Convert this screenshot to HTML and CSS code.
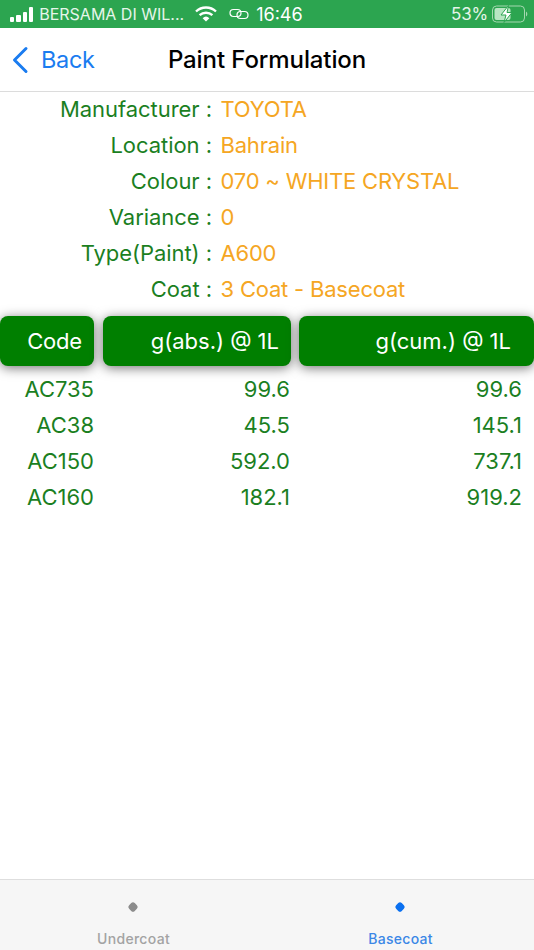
FILE: index.html
```html
<!DOCTYPE html>
<html lang="en">
<head>
    <meta charset="UTF-8">
    <meta name="viewport" content="width=device-width, initial-scale=1.0">
    <title>Paint Formulation</title>
    <link rel="stylesheet" href="styles.css">
</head>
<body>
    <div class="phone">
        <div class="status-bar">
            <div class="status-left">
                <div class="signal">
                    <span class="b1"></span><span class="b2"></span><span class="b3"></span><span class="b4"></span>
                </div>
                <span class="carrier">BERSAMA DI WIL...</span>
                <svg class="wifi" width="22" height="16" viewBox="0 0 22 16">
                    <path d="M1 5.5 A14.5 14.5 0 0 1 21 5.5" fill="none" stroke="#fff" stroke-width="2.4"/>
                    <path d="M4.6 9.2 A9.5 9.5 0 0 1 17.4 9.2" fill="none" stroke="#fff" stroke-width="2.4"/>
                    <path d="M11 15.5 L7.6 12.2 A5 5 0 0 1 14.4 12.2 Z" fill="#fff"/>
                </svg>
                <svg class="link" width="20" height="12" viewBox="0 0 20 12">
                    <rect x="1" y="1.5" width="11" height="7" rx="3.5" fill="none" stroke="#fff" stroke-width="1.2"/>
                    <rect x="8" y="3.5" width="11" height="7" rx="3.5" fill="none" stroke="#fff" stroke-width="1.2"/>
                </svg>
                <span class="clock">16:46</span>
            </div>
            <div class="status-right">
                <span class="percent">53%</span>
                <svg class="battery" width="36" height="18" viewBox="0 0 36 18">
                    <rect x="0.5" y="1" width="32" height="16" rx="4" fill="none" stroke="#a5d8b0" stroke-width="1"/>
                    <rect x="2.5" y="3" width="16" height="12" rx="2" fill="#b9e6c3"/>
                    <path d="M34 6.5 A3 3 0 0 1 34 11.5 Z" fill="#a5d8b0"/>
                    <path d="M16.5 0.5 L9 10 L14 10 L12 17.5 L20 7.5 L15 7.5 Z" fill="#fff" stroke="#2ca550" stroke-width="1"/>
                </svg>
            </div>
        </div>

        <div class="nav-bar">
            <div class="back">
                <svg width="18" height="28" viewBox="0 0 18 28">
                    <path d="M15 2.5 L3.5 14 L15 25.5" fill="none" stroke="#1a7cf0" stroke-width="3" stroke-linecap="round" stroke-linejoin="round"/>
                </svg>
                <span>Back</span>
            </div>
            <div class="nav-title">Paint Formulation</div>
        </div>

        <div class="info">
            <div class="info-row"><span class="info-label">Manufacturer :</span><span class="info-value">TOYOTA</span></div>
            <div class="info-row"><span class="info-label">Location :</span><span class="info-value">Bahrain</span></div>
            <div class="info-row"><span class="info-label">Colour :</span><span class="info-value">070 ~ WHITE CRYSTAL</span></div>
            <div class="info-row"><span class="info-label">Variance :</span><span class="info-value">0</span></div>
            <div class="info-row"><span class="info-label">Type(Paint) :</span><span class="info-value">A600</span></div>
            <div class="info-row"><span class="info-label">Coat :</span><span class="info-value">3 Coat - Basecoat</span></div>
        </div>

        <div class="table-head">
            <div class="head-cell col-code">Code</div>
            <div class="head-cell col-abs">g(abs.) @ 1L</div>
            <div class="head-cell col-cum">g(cum.) @ 1L</div>
        </div>

        <div class="table-body">
            <div class="table-row"><span class="col-code">AC735</span><span class="col-abs">99.6</span><span class="col-cum">99.6</span></div>
            <div class="table-row"><span class="col-code">AC38</span><span class="col-abs">45.5</span><span class="col-cum">145.1</span></div>
            <div class="table-row"><span class="col-code">AC150</span><span class="col-abs">592.0</span><span class="col-cum">737.1</span></div>
            <div class="table-row"><span class="col-code">AC160</span><span class="col-abs">182.1</span><span class="col-cum">919.2</span></div>
        </div>

        <div class="tab-bar">
            <div class="tab">
                <span class="tab-dot"></span>
                <span class="tab-label">Undercoat</span>
            </div>
            <div class="tab active">
                <span class="tab-dot"></span>
                <span class="tab-label">Basecoat</span>
            </div>
        </div>
    </div>
</body>
</html>
```

FILE: styles.css
```css
html, body {
    margin: 0;
    padding: 0;
    background: #fff;
}
.phone {
    width: 534px;
    height: 950px;
    display: flex;
    flex-direction: column;
    overflow: hidden;
    font-family: Inter, "Liberation Sans", Arial, sans-serif;
}

/* status bar */
.status-bar {
    height: 28px;
    flex: none;
    background-color: #2ca550;
    color: #fff;
    display: flex;
    justify-content: space-between;
    align-items: center;
    padding: 0 6px 0 10px;
    box-sizing: border-box;
}
.status-left, .status-right {
    display: flex;
    align-items: center;
}
.signal {
    display: flex;
    align-items: flex-end;
    gap: 2px;
    height: 15px;
    margin-right: 6px;
}
.signal span {
    width: 4.3px;
    background: #fff;
    border-radius: 1px;
}
.b1 { height: 5px; }
.b2 { height: 7px; }
.b3 { height: 10px; }
.b4 { height: 15px; }
.carrier {
    font-size: 16px;
    color: #e6f5ea;
}
.wifi { margin-left: 11px; }
.link { margin-left: 12px; }
.clock {
    font-size: 18px;
    margin-left: 7px;
}
.percent {
    font-size: 17px;
    color: #e6f5ea;
    margin-right: 4px;
    letter-spacing: -0.2px;
}

/* nav */
.nav-bar {
    height: 64px;
    flex: none;
    box-sizing: border-box;
    border-bottom: 1px solid #dcdcdc;
    display: flex;
    align-items: center;
    position: relative;
}
.back {
    display: flex;
    align-items: center;
    gap: 12px;
    color: #1a7cf0;
    font-size: 23.5px;
    letter-spacing: -0.3px;
    padding-left: 11px;
}
.nav-title {
    position: absolute;
    left: 0;
    right: 0;
    text-align: center;
    font-size: 24px;
    font-weight: 500;
    letter-spacing: -0.1px;
    color: #000;
}

/* info block */
.info {
    flex: none;
}
.info-row {
    height: 36px;
    display: flex;
    align-items: center;
    font-size: 22px;
    position: relative;
    top: -1px;
}
.info-label {
    width: 212px;
    text-align: right;
    color: #1b7f1f;
    letter-spacing: -0.05px;
}
.info-value {
    margin-left: 8.5px;
    color: #f5a623;
    letter-spacing: -0.2px;
}

/* table */
.table-head {
    display: flex;
    flex: none;
    height: 50px;
    margin-top: 8px;
}
.head-cell {
    background-color: #007f00;
    color: #fff;
    border-radius: 8px;
    box-shadow: 0 2px 12px rgba(0, 0, 0, 0.55);
    display: flex;
    align-items: center;
    justify-content: flex-end;
    font-size: 22px;
    box-sizing: border-box;
    padding-right: 12px;
}
.head-cell.col-code { width: 94px; letter-spacing: -0.2px; }
.head-cell.col-abs { width: 188px; margin-left: 9px; }
.head-cell.col-cum { width: 235px; margin-left: 8px; padding-right: 23px; }
.table-body {
    padding-top: 5px;
    flex: 1;
}
.table-row {
    height: 36px;
    display: flex;
    align-items: center;
    font-size: 22px;
    color: #1b7f1f;
    text-align: right;
}
.table-row .col-code { width: 94px; }
.table-row .col-abs { width: 196px; }
.table-row .col-cum { width: 232px; }

/* bottom tabs */
.tab-bar {
    height: 71px;
    flex: none;
    box-sizing: border-box;
    background-color: #f6f6f6;
    border-top: 1px solid #dedede;
    display: flex;
}
.tab {
    flex: 1;
    display: flex;
    flex-direction: column;
    align-items: center;
    color: #a3a3a3;
}
.tab-dot {
    width: 8px;
    height: 8px;
    margin-top: 23px;
    margin-right: 1px;
    background: #8c8c8c;
    border-radius: 2.5px;
    transform: rotate(45deg);
}
.tab-label {
    font-size: 14px;
    font-weight: 500;
    margin-top: 19px;
    letter-spacing: 0.3px;
}
.tab.active { color: #3b87e6; }
.tab.active .tab-dot { background: #0a70f0; }
```
